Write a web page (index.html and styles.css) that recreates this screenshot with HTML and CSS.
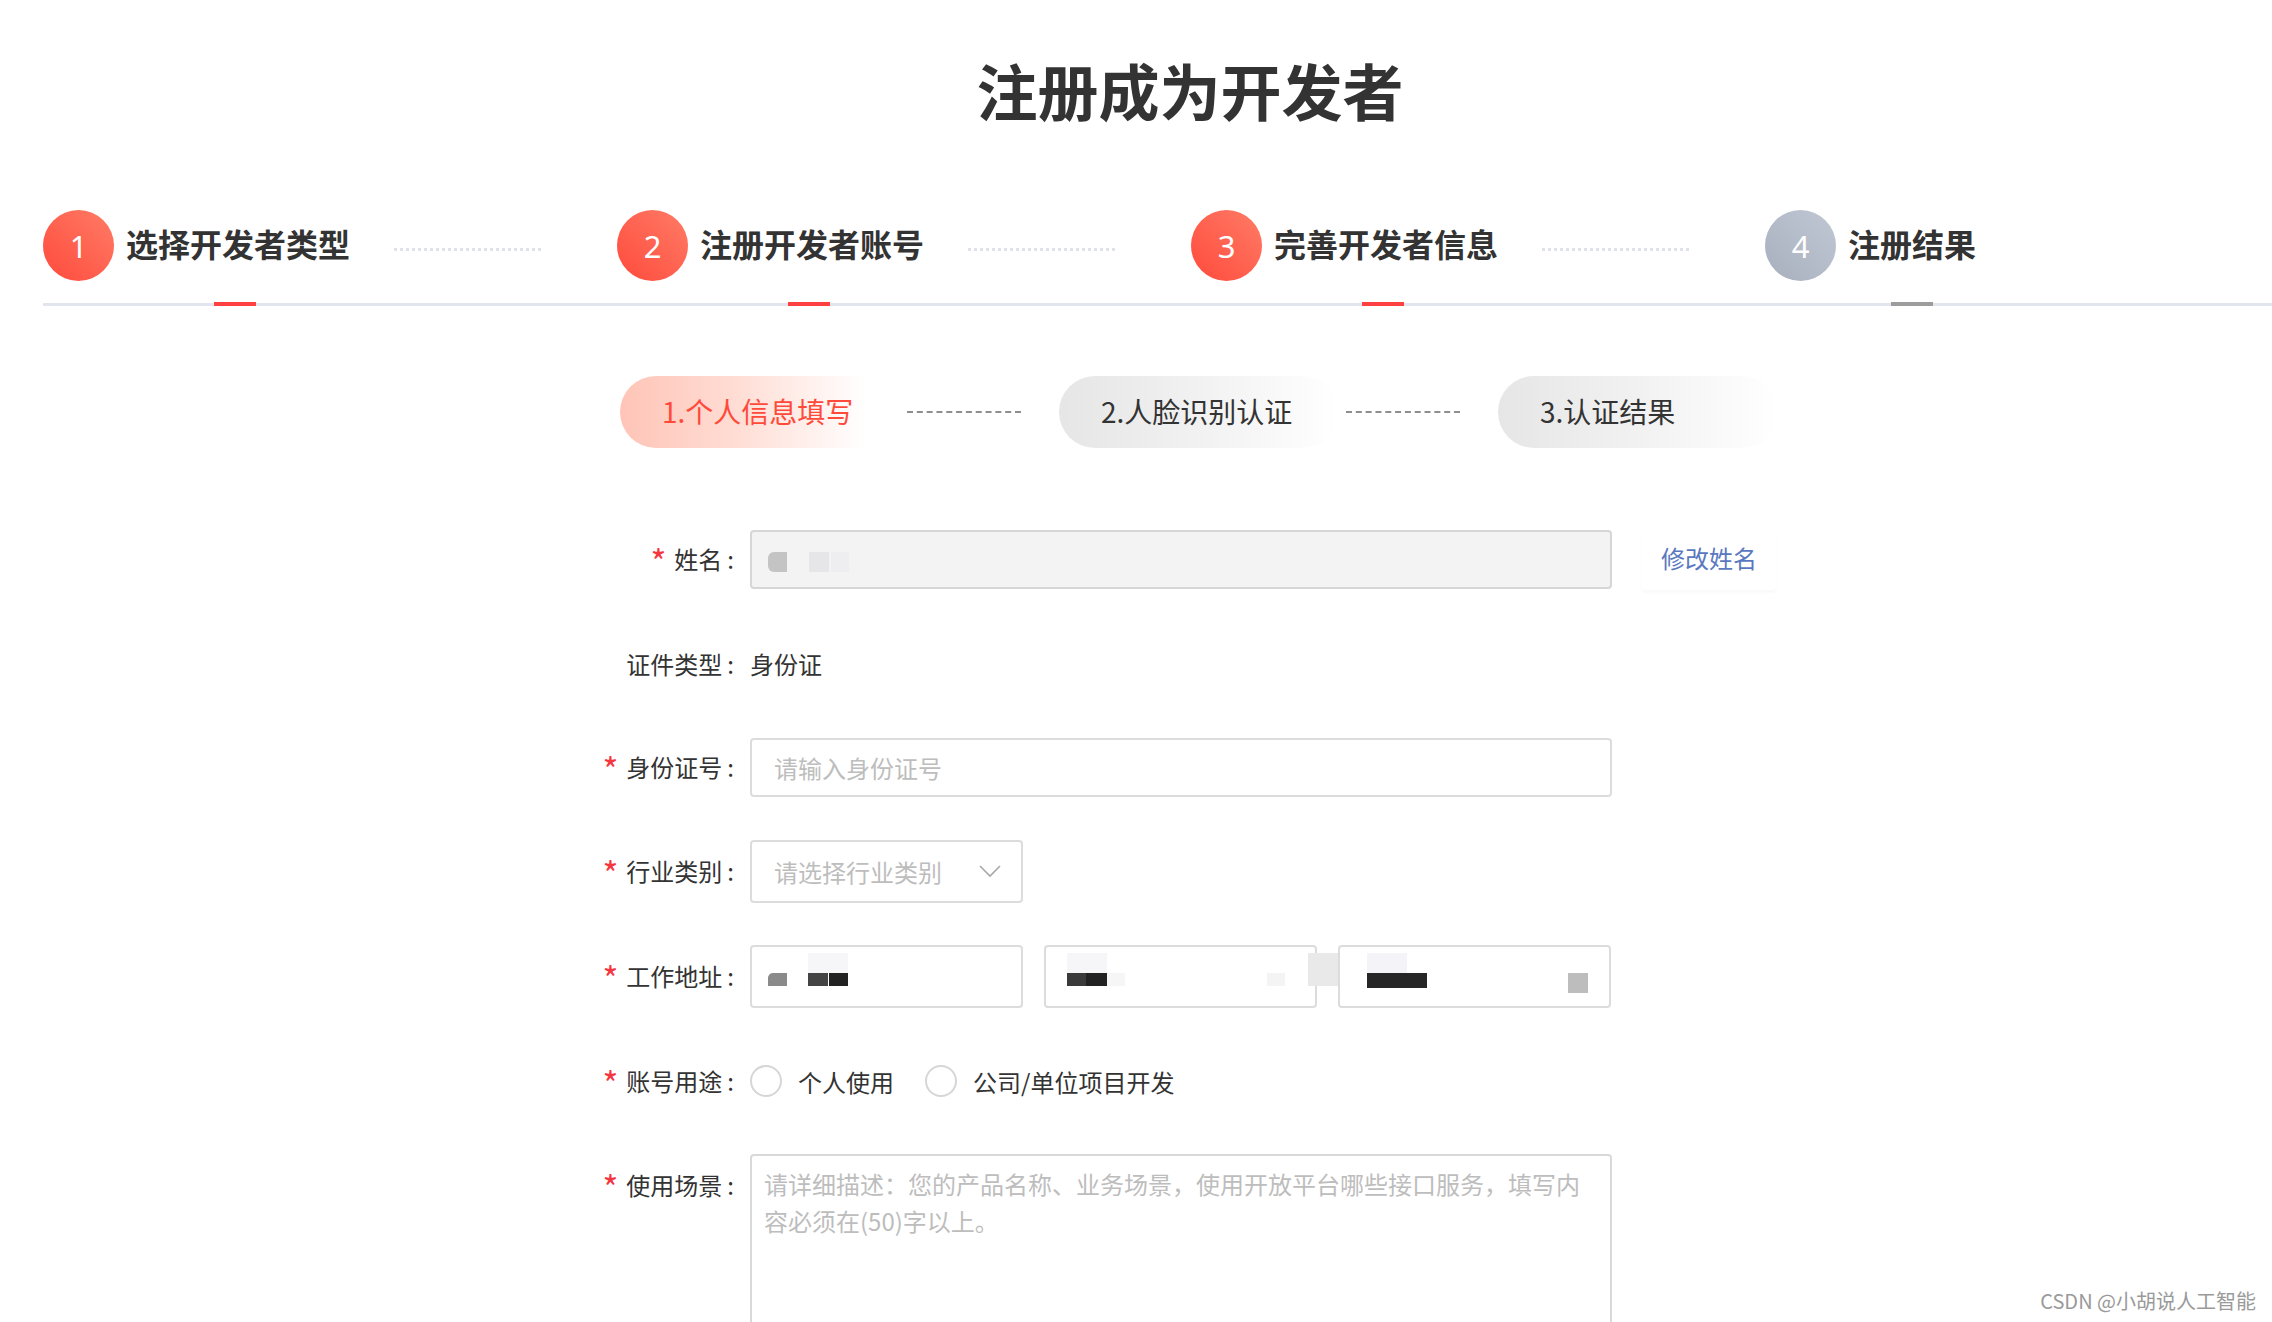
FILE: index.html
```html
<!DOCTYPE html>
<html lang="zh-CN">
<head>
<meta charset="utf-8">
<title>注册成为开发者</title>
<link rel="stylesheet" href="styles.css">
</head>
<body>
<div class="page">
  <h1 class="title">注册成为开发者</h1>

  <div class="steps">
    <div class="step done">
      <span class="num">1</span><span class="label">选择开发者类型</span><span class="dots"></span>
    </div>
    <div class="step done">
      <span class="num">2</span><span class="label">注册开发者账号</span><span class="dots"></span>
    </div>
    <div class="step done">
      <span class="num">3</span><span class="label">完善开发者信息</span><span class="dots"></span>
    </div>
    <div class="step todo">
      <span class="num">4</span><span class="label">注册结果</span>
    </div>
  </div>

  <div class="substeps">
    <div class="pill current">1.个人信息填写</div><span class="dash"></span>
    <div class="pill">2.人脸识别认证</div><span class="dash"></span>
    <div class="pill">3.认证结果</div>
  </div>

  <div class="form">
    <div class="row">
      <div class="lbl"><span class="req">*</span>姓名<span class="colon">:</span></div>
      <div class="field wide disabled">
        <span class="mosaic m-name">
          <i class="b" style="left:0;top:0;width:19px;height:20px;background:#c4c4c4;border-radius:6px 0 0 6px"></i>
          <i class="b" style="left:41px;top:0;width:20px;height:20px;background:#e6e6e8"></i>
          <i class="b" style="left:63px;top:0;width:18px;height:20px;background:#eeeef0"></i>
        </span>
      </div>
      <div class="link-box">修改姓名</div>
    </div>

    <div class="row">
      <div class="lbl">证件类型<span class="colon">:</span></div>
      <div class="value">身份证</div>
    </div>

    <div class="row">
      <div class="lbl"><span class="req">*</span>身份证号<span class="colon">:</span></div>
      <div class="field wide"><span class="ph">请输入身份证号</span></div>
    </div>

    <div class="row">
      <div class="lbl"><span class="req">*</span>行业类别<span class="colon">:</span></div>
      <div class="field select"><span class="ph">请选择行业类别</span>
        <svg class="chev" width="22" height="13" viewBox="0 0 22 13"><polyline points="1,1 11,11 21,1" fill="none" stroke="#a8a8a8" stroke-width="1.6"/></svg>
      </div>
    </div>

    <div class="row">
      <div class="lbl"><span class="req">*</span>工作地址<span class="colon">:</span></div>
      <div class="selects">
        <div class="field select tall">
          <span class="mosaic">
            <i class="b" style="left:40px;top:0;width:40px;height:20px;background:#f6f6f9"></i>
            <i class="b" style="left:0;top:20px;width:19px;height:13px;background:#8a8a8a;border-radius:5px 0 0 0"></i>
            <i class="b" style="left:40px;top:20px;width:20px;height:13px;background:#444"></i>
            <i class="b" style="left:61px;top:20px;width:19px;height:13px;background:#222"></i>
          </span>
        </div>
        <div class="field select tall">
          <span class="mosaic">
            <i class="b" style="left:5px;top:0;width:40px;height:20px;background:#f6f6f9"></i>
            <i class="b" style="left:5px;top:20px;width:19px;height:13px;background:#3a3a3a"></i>
            <i class="b" style="left:24px;top:20px;width:21px;height:13px;background:#222"></i>
            <i class="b" style="left:45px;top:20px;width:18px;height:13px;background:#f6f6f6"></i>
            <i class="b" style="left:205px;top:20px;width:18px;height:13px;background:#f4f4f4"></i>
            <i class="b" style="left:246px;top:0;width:40px;height:33px;background:#e9e9e9"></i>
          </span>
        </div>
        <div class="field select tall">
          <span class="mosaic">
            <i class="b" style="left:11px;top:0;width:40px;height:20px;background:#f4f4f8"></i>
            <i class="b" style="left:11px;top:20px;width:60px;height:15px;background:#262626"></i>
            <i class="b" style="left:212px;top:20px;width:20px;height:20px;background:#bdbdbd"></i>
          </span>
        </div>
      </div>
    </div>

    <div class="row">
      <div class="lbl"><span class="req">*</span>账号用途<span class="colon">:</span></div>
      <div class="radios">
        <span class="radio"></span><span class="rtext">个人使用</span>
        <span class="radio second"></span><span class="rtext">公司/单位项目开发</span>
      </div>
    </div>

    <div class="row top">
      <div class="lbl"><span class="req">*</span>使用场景<span class="colon">:</span></div>
      <div class="area"><span class="ph">请详细描述：您的产品名称、业务场景，使用开放平台哪些接口服务，填写内容必须在(50)字以上。</span></div>
    </div>
  </div>
</div>
<div class="watermark">CSDN @小胡说人工智能</div>
</body>
</html>
```

FILE: styles.css
```css
html, body {
  margin: 0;
  padding: 0;
  background: #fff;
  overflow: hidden;
}
body {
  font-family: "Noto Sans CJK SC", "Noto Sans", "Liberation Sans", sans-serif;
  color: #333;
  width: 2272px;
  height: 1322px;
  position: relative;
}
.page {
  margin-left: 43px;
  width: 2294px;
}
.title {
  margin: 0;
  padding-top: 59px;
  font-size: 61px;
  line-height: 61px;
  font-weight: 700;
  text-align: center;
  color: #333;
}

/* main steps */
.steps {
  margin-top: 90px;
  display: flex;
  padding-bottom: 22px;
  border-bottom: 3px solid #e2e5ee;
}
.step {
  width: 574px;
  flex: none;
  display: flex;
  align-items: center;
}
.num {
  width: 71px;
  height: 71px;
  border-radius: 50%;
  flex: none;
  display: flex;
  align-items: center;
  justify-content: center;
  color: #fff;
  font-size: 31px;
  font-family: "Noto Sans", "Liberation Sans", sans-serif;
  font-weight: 400;
}
.done .num {
  background: linear-gradient(45deg, #ff4a3c 0%, #ff7c66 100%);
}
.todo .num {
  background: linear-gradient(45deg, #a7afbe 0%, #c1c8d4 100%);
}
.label {
  margin-left: 12px;
  margin-bottom: 5px;
  width: 218px;
  font-size: 32px;
  line-height: 40px;
  font-weight: 700;
  color: #333;
  position: relative;
  white-space: nowrap;
}
.todo .label {
  width: auto;
}
.label::after {
  content: "";
  position: absolute;
  left: 50%;
  bottom: -43px;
  width: 42px;
  height: 4px;
  margin-left: -21px;
  background: #ff4040;
}
.todo .label::after {
  background: #9c9c9c;
}
.dots {
  margin-left: 50px;
  width: 147px;
  margin-top: 8px;
  border-top: 3px dotted #dfe2ea;
}

/* sub steps */
.substeps {
  margin-top: 70px;
  margin-left: 577px;
  display: flex;
  align-items: center;
}
.pill {
  width: 280px;
  height: 72px;
  box-sizing: border-box;
  padding-left: 42px;
  border-radius: 36px;
  font-size: 28px;
  line-height: 70px;
  color: #333;
  white-space: nowrap;
  background: linear-gradient(90deg, #e6e6e6 0%, #f0f0f0 45%, #ffffff 100%);
}
.pill.current {
  color: #ff4a3a;
  background: linear-gradient(90deg, #ffc4b7 0%, #ffdcd3 40%, #ffffff 88%);
}
.dash {
  width: 114px;
  margin: 0 38px 0 7px;
  border-top: 2px dashed #8e8e8e;
}

/* form */
.form {
  margin-top: 80px;
  margin-left: 557px;
}
.row {
  display: flex;
  align-items: center;
  min-height: 62px;
  margin-bottom: 42px;
}
.row.top {
  align-items: flex-start;
}
.lbl {
  width: 150px;
  flex: none;
  box-sizing: border-box;
  padding-right: 16px;
  text-align: right;
  font-size: 24px;
  color: #333;
  white-space: nowrap;
}
.row.top .lbl {
  padding-top: 12px;
  line-height: 37px;
}
.colon {
  margin-left: 5px;
}
.req {
  color: #f5363f;
  font-size: 34px;
  line-height: 1;
  margin-right: 8px;
  vertical-align: -6px;
}
.value {
  font-size: 24px;
  color: #333;
}
.field {
  position: relative;
  box-sizing: border-box;
  border: 2px solid #dcdcdc;
  border-radius: 4px;
  height: 59px;
  padding: 0 22px;
  display: flex;
  align-items: center;
  font-size: 24px;
  background: #fff;
}
.field.wide {
  width: 862px;
}
.field.disabled {
  background: #f3f3f4;
  border-color: #d6d6d6;
}
.field.select {
  width: 273px;
  height: 63px;
  justify-content: space-between;
  padding-right: 20px;
}
.ph {
  color: #bdbdbd;
}
.chev {
  display: block;
}
.selects {
  display: flex;
  gap: 21px;
}
.mosaic {
  position: absolute;
  left: 16px;
  top: 6px;
}
.mosaic.m-name {
  top: 20px;
}
.b {
  position: absolute;
  display: block;
}
.link-box {
  margin-left: 30px;
  width: 134px;
  height: 62px;
  box-sizing: border-box;
  padding-bottom: 4px;
  display: flex;
  align-items: center;
  justify-content: center;
  font-size: 24px;
  color: #5a78c0;
  box-shadow: 0 3px 3px rgba(0, 0, 0, 0.025);
  border-radius: 4px;
}
.radios {
  display: flex;
  align-items: center;
  font-size: 24px;
}
.radio {
  width: 32px;
  height: 32px;
  box-sizing: border-box;
  border: 2px solid #d6d6d6;
  border-radius: 50%;
}
.radio.second {
  margin-left: 31px;
}
.rtext {
  margin-left: 16px;
}
.area {
  width: 862px;
  height: 240px;
  box-sizing: border-box;
  border: 2px solid #d9d9d9;
  border-radius: 4px;
  padding: 9px 12px;
  font-size: 24px;
  line-height: 37px;
}
.watermark {
  position: absolute;
  right: 16px;
  bottom: 9px;
  font-size: 20px;
  line-height: 24px;
  color: #9a9a9a;
  white-space: nowrap;
}
```
